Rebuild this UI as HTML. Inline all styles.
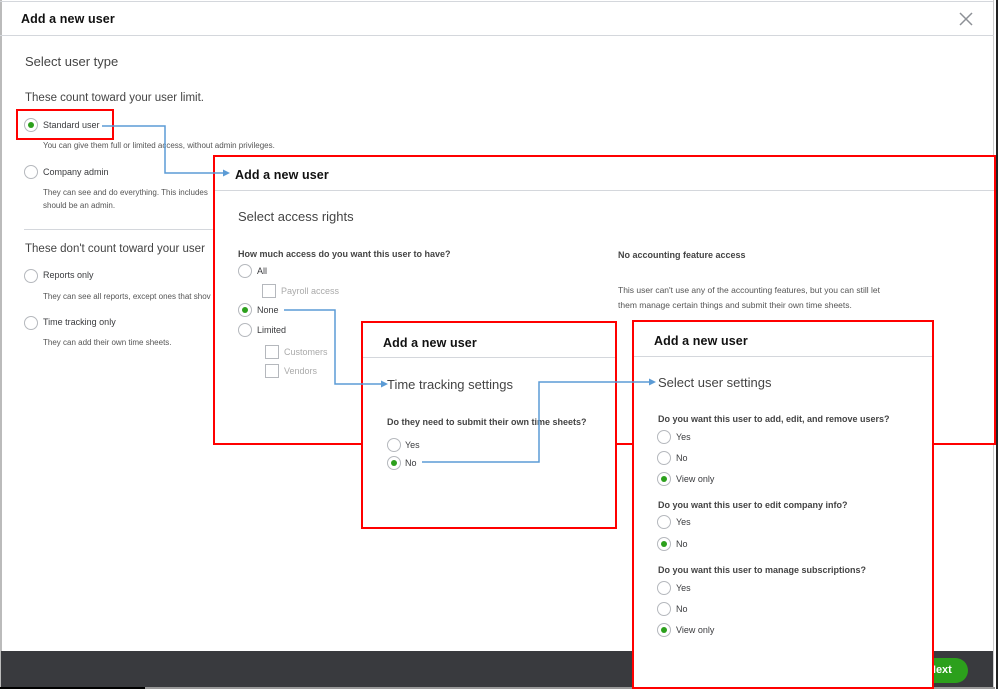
<!DOCTYPE html>
<html><head><meta charset="utf-8"><style>
*{margin:0;padding:0;box-sizing:border-box}
body{width:998px;height:689px;position:relative;overflow:hidden;background:#fff;font-family:"Liberation Sans",sans-serif;color:#393a3d}
.a{position:absolute;white-space:nowrap}
.p{position:absolute;background:#fff;border:2px solid #f00}
.hl{position:absolute;height:1px;background:#d4d7dc}
.r{position:absolute;width:14px;height:14px;border:1px solid #b5b8bd;border-radius:50%;background:#fff}
.r.c::after{content:"";position:absolute;left:3px;top:3px;width:6px;height:6px;border-radius:50%;background:#2ca01c}
.cb{position:absolute;width:14px;height:14px;border:1px solid #b5b8bd;background:#fff}
.h{font-size:12.5px;color:#111;font-weight:bold;letter-spacing:0.1px}
.t{font-size:13px;color:#444}
.s{font-size:9px}
.d{font-size:8px;color:#555}
.q{font-size:9px;font-weight:bold;color:#444}
.g{color:#aaa}
</style></head><body>
<div class="a" style="left:0;top:0;width:2px;height:689px;background:#bbb"></div>
<div class="hl" style="left:0;top:1px;width:994px"></div>
<div class="a" style="left:993px;top:0;width:1px;height:689px;background:#ccc"></div>
<div class="a" style="left:996px;top:0;width:2px;height:689px;background:#222"></div>
<div class="hl" style="left:0;top:35px;width:994px"></div>
<div class="a h" style="left:21px;top:12px">Add a new user</div>
<svg class="a" style="left:959px;top:12px" width="14" height="14"><path d="M1 1L13 13M13 1L1 13" stroke="#8d9096" stroke-width="1.5"/></svg>
<div class="a t" style="left:25px;top:54px">Select user type</div>
<div class="a" style="left:25px;top:92px;font-size:11.5px;color:#444">These count toward your user limit.</div>
<div class="a" style="left:16px;top:109px;width:98px;height:31px;border:2px solid #f00"></div>
<div class="r c" style="left:24px;top:118px"></div>
<div class="a s" style="left:43px;top:120px">Standard user</div>
<div class="a d" style="left:43px;top:141px">You can give them full or limited access, without admin privileges.</div>
<div class="r" style="left:24px;top:165px"></div>
<div class="a s" style="left:43px;top:167px">Company admin</div>
<div class="a d" style="left:43px;top:188px">They can see and do everything. This includes</div>
<div class="a d" style="left:43px;top:201px">should be an admin.</div>
<div class="hl" style="left:24px;top:229px;width:190px"></div>
<div class="a" style="left:25px;top:243px;font-size:11.5px;color:#444">These don't count toward your user</div>
<div class="r" style="left:24px;top:269px"></div>
<div class="a s" style="left:43px;top:270px">Reports only</div>
<div class="a d" style="left:43px;top:292px">They can see all reports, except ones that shov</div>
<div class="r" style="left:24px;top:316px"></div>
<div class="a s" style="left:43px;top:317px">Time tracking only</div>
<div class="a d" style="left:43px;top:338px">They can add their own time sheets.</div>
<div class="a" style="left:1px;top:651px;width:992px;height:36px;background:#393a3e"></div>
<div class="a" style="left:0;top:687px;width:145px;height:2px;background:#000"></div>
<div class="a" style="left:145px;top:687px;width:850px;height:2px;background:#999"></div>
<div class="a" style="left:900px;top:658px;width:68px;height:25px;border-radius:13px;background:#2ca01c;color:#fff;font-weight:bold;font-size:11px;line-height:25px;padding-left:28px">Next</div>
<div class="p" style="left:213px;top:155px;width:783px;height:290px"></div>
<div class="hl" style="left:215px;top:190px;width:779px"></div>
<div class="a h" style="left:235px;top:168px">Add a new user</div>
<div class="a t" style="left:238px;top:209px">Select access rights</div>
<div class="a q" style="left:238px;top:249px">How much access do you want this user to have?</div>
<div class="r" style="left:238px;top:264px"></div>
<div class="a s" style="left:257px;top:266px">All</div>
<div class="cb" style="left:262px;top:284px"></div>
<div class="a s g" style="left:281px;top:286px">Payroll access</div>
<div class="r c" style="left:238px;top:303px"></div>
<div class="a s" style="left:257px;top:305px">None</div>
<div class="r" style="left:238px;top:323px"></div>
<div class="a s" style="left:257px;top:325px">Limited</div>
<div class="cb" style="left:265px;top:345px"></div>
<div class="a s g" style="left:284px;top:347px">Customers</div>
<div class="cb" style="left:265px;top:364px"></div>
<div class="a s g" style="left:284px;top:366px">Vendors</div>
<div class="a q" style="left:618px;top:250px">No accounting feature access</div>
<div class="a d" style="left:618px;top:283px;font-size:8.5px;line-height:15px">This user can't use any of the accounting features, but you can still let<br>them manage certain things and submit their own time sheets.</div>
<div class="p" style="left:361px;top:321px;width:256px;height:208px"></div>
<div class="hl" style="left:363px;top:357px;width:252px"></div>
<div class="a h" style="left:383px;top:336px">Add a new user</div>
<div class="a t" style="left:387px;top:377px">Time tracking settings</div>
<div class="a q" style="left:387px;top:417px">Do they need to submit their own time sheets?</div>
<div class="r" style="left:387px;top:438px"></div>
<div class="a s" style="left:405px;top:440px">Yes</div>
<div class="r c" style="left:387px;top:456px"></div>
<div class="a s" style="left:405px;top:458px">No</div>
<div class="p" style="left:632px;top:320px;width:302px;height:369px"></div>
<div class="hl" style="left:634px;top:356px;width:298px"></div>
<div class="a h" style="left:654px;top:334px">Add a new user</div>
<div class="a t" style="left:658px;top:375px">Select user settings</div>
<div class="a q" style="left:658px;top:414px">Do you want this user to add, edit, and remove users?</div>
<div class="r" style="left:657px;top:430px"></div><div class="a s" style="left:676px;top:432px">Yes</div>
<div class="r" style="left:657px;top:451px"></div><div class="a s" style="left:676px;top:453px">No</div>
<div class="r c" style="left:657px;top:472px"></div><div class="a s" style="left:676px;top:474px">View only</div>
<div class="a q" style="left:658px;top:500px">Do you want this user to edit company info?</div>
<div class="r" style="left:657px;top:515px"></div><div class="a s" style="left:676px;top:517px">Yes</div>
<div class="r c" style="left:657px;top:537px"></div><div class="a s" style="left:676px;top:539px">No</div>
<div class="a q" style="left:658px;top:565px">Do you want this user to manage subscriptions?</div>
<div class="r" style="left:657px;top:581px"></div><div class="a s" style="left:676px;top:583px">Yes</div>
<div class="r" style="left:657px;top:602px"></div><div class="a s" style="left:676px;top:604px">No</div>
<div class="r c" style="left:657px;top:623px"></div><div class="a s" style="left:676px;top:625px">View only</div>
<svg class="a" style="left:0;top:0" width="998" height="689">
<g stroke="#5b9bd5" stroke-width="1.5" fill="none">
<path d="M102 126H165V173H224"/>
<path d="M284 310H335V384H382"/>
<path d="M422 462H539V382H650"/>
</g>
<g fill="#5b9bd5">
<path d="M230 173l-7-3.5v7z"/>
<path d="M388 384l-7-3.5v7z"/>
<path d="M656 382l-7-3.5v7z"/>
</g>
</svg>
</body></html>
